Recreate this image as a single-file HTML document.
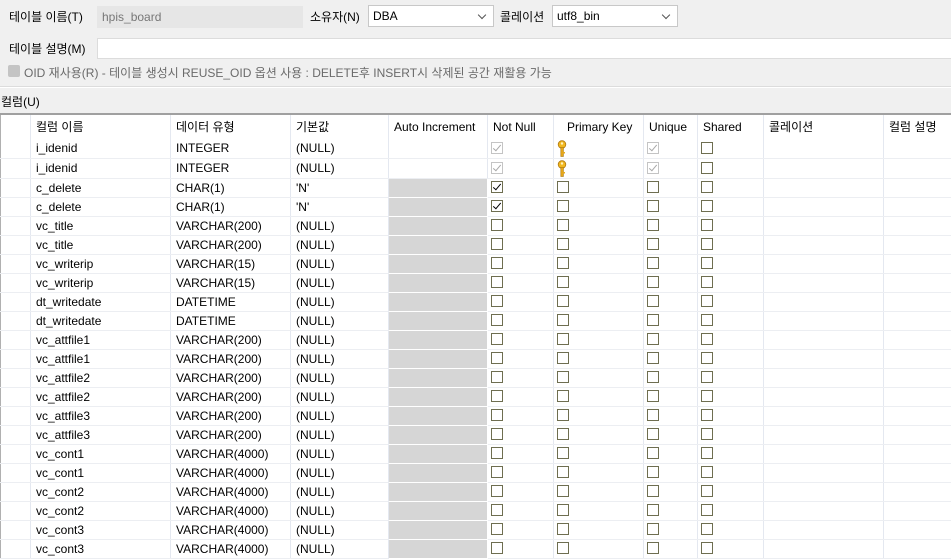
<!DOCTYPE html>
<html><head><meta charset="utf-8"><style>
*{box-sizing:border-box;margin:0;padding:0}
body{width:951px;height:558px;overflow:hidden;background:#fff;font-family:"Liberation Sans","Noto Sans CJK KR",sans-serif;font-size:12px;color:#000;position:relative}
.top{position:absolute;left:0;top:0;width:951px;height:87px;background:#f0f0f0;border-bottom:1px solid #dcdcdc}
.a{position:absolute;white-space:nowrap}
.box{position:absolute;border:1px solid #c8c8c8;background:#fff;height:22px;line-height:20px;padding-left:4px}
.sel:after{content:"";position:absolute;right:8px;top:6px;width:5px;height:5px;border-right:1px solid #555;border-bottom:1px solid #555;transform:rotate(45deg)}
.mid{position:absolute;left:0;top:88px;width:951px;height:25px;background:#f0f0f0}
table{position:absolute;left:0;top:113px;border-collapse:collapse;table-layout:fixed;width:951px;border-top:2px solid #a0a0a0;border-left:1px solid #b0b0b0}
td{height:19px;border-bottom:1px solid #eceef2;border-right:1px solid #e4e8f0;padding:0 0 0 5px;white-space:nowrap;overflow:hidden;position:relative;vertical-align:middle;line-height:18px}
tr.h td{height:24px;border-bottom:none;line-height:24px}
td.g{background:#d6d6d6;border:1px solid #fff}
.c{display:inline-block;width:12px;height:12px;border:1px solid #6e6e50;vertical-align:middle;position:relative;top:-1px;margin-left:-2px;background:#fff}
.cd{border-color:#c4c4c4}
.c.k:after,.c.kd:after{content:"";position:absolute;left:3px;top:0px;width:3px;height:7px;border-right:1.5px solid #000;border-bottom:1.5px solid #000;transform:rotate(40deg)}
.c.kd:after{border-color:#a8a8a8;border-width:1px}
.key{display:inline-block;margin-left:-2px;vertical-align:middle}
</style></head><body>
<div class="top">
<div class="a" style="left:9px;top:8px">테이블 이름(T)</div>
<div class="box" style="left:97px;top:6px;width:206px;background:#e6e6e6;border-color:#e6e6e6;color:#777">hpis_board</div>
<div class="a" style="left:310px;top:8px">소유자(N)</div>
<div class="box sel" style="left:368px;top:5px;width:126px">DBA</div>
<div class="a" style="left:500px;top:8px">콜레이션</div>
<div class="box sel" style="left:552px;top:5px;width:126px">utf8_bin</div>
<div class="a" style="left:9px;top:40px">테이블 설명(M)</div>
<div class="box" style="left:97px;top:38px;width:860px;height:21px;border-color:#dcdcdc"></div>
<div class="a" style="left:8px;top:65px;width:12px;height:12px;background:#c4c4c4;border-radius:2px"></div>
<div class="a" style="left:24px;top:64px;color:#6a6a6a">OID 재사용(R) - 테이블 생성시 REUSE_OID 옵션 사용 : DELETE후 INSERT시 삭제된 공간 재활용 가능</div>
</div>
<div class="mid"><div class="a" style="left:1px;top:5px">컬럼(U)</div></div>
<svg width="0" height="0" style="position:absolute"><defs><symbol id="k" viewBox="0 0 10 18"><circle cx="5" cy="4.5" r="3.8" fill="#f2b820" stroke="#b07a10" stroke-width=".8"/><circle cx="5" cy="3.5" r="1.2" fill="#fff3c0"/><rect x="3.8" y="7.5" width="2.6" height="9" fill="#e6a818" stroke="#a87410" stroke-width=".6"/><rect x="6" y="12" width="2" height="1.5" fill="#e6a818"/></symbol></defs></svg>
<table>
<colgroup><col style="width:30px"><col style="width:140px"><col style="width:120px"><col style="width:98px"><col style="width:99px"><col style="width:66px"><col style="width:90px"><col style="width:54px"><col style="width:66px"><col style="width:120px"><col style="width:68px"></colgroup>
<tr class="h"><td></td><td>컬럼 이름</td><td>데이터 유형</td><td>기본값</td><td>Auto Increment</td><td>Not Null</td><td style="padding-left:13px">Primary Key</td><td>Unique</td><td>Shared</td><td>콜레이션</td><td>컬럼 설명</td></tr>
<tr><td></td><td>i_idenid</td><td>INTEGER</td><td>(NULL)</td><td></td><td><span class="c cd kd"></span></td><td><svg class="key" width="10" height="18"><use href="#k"/></svg></td><td><span class="c cd kd"></span></td><td><span class="c"></span></td><td></td><td></td></tr>
<tr><td></td><td>i_idenid</td><td>INTEGER</td><td>(NULL)</td><td></td><td><span class="c cd kd"></span></td><td><svg class="key" width="10" height="18"><use href="#k"/></svg></td><td><span class="c cd kd"></span></td><td><span class="c"></span></td><td></td><td></td></tr>
<tr><td></td><td>c_delete</td><td>CHAR(1)</td><td>'N'</td><td class="g"></td><td><span class="c k"></span></td><td><span class="c"></span></td><td><span class="c"></span></td><td><span class="c"></span></td><td></td><td></td></tr>
<tr><td></td><td>c_delete</td><td>CHAR(1)</td><td>'N'</td><td class="g"></td><td><span class="c k"></span></td><td><span class="c"></span></td><td><span class="c"></span></td><td><span class="c"></span></td><td></td><td></td></tr>
<tr><td></td><td>vc_title</td><td>VARCHAR(200)</td><td>(NULL)</td><td class="g"></td><td><span class="c"></span></td><td><span class="c"></span></td><td><span class="c"></span></td><td><span class="c"></span></td><td></td><td></td></tr>
<tr><td></td><td>vc_title</td><td>VARCHAR(200)</td><td>(NULL)</td><td class="g"></td><td><span class="c"></span></td><td><span class="c"></span></td><td><span class="c"></span></td><td><span class="c"></span></td><td></td><td></td></tr>
<tr><td></td><td>vc_writerip</td><td>VARCHAR(15)</td><td>(NULL)</td><td class="g"></td><td><span class="c"></span></td><td><span class="c"></span></td><td><span class="c"></span></td><td><span class="c"></span></td><td></td><td></td></tr>
<tr><td></td><td>vc_writerip</td><td>VARCHAR(15)</td><td>(NULL)</td><td class="g"></td><td><span class="c"></span></td><td><span class="c"></span></td><td><span class="c"></span></td><td><span class="c"></span></td><td></td><td></td></tr>
<tr><td></td><td>dt_writedate</td><td>DATETIME</td><td>(NULL)</td><td class="g"></td><td><span class="c"></span></td><td><span class="c"></span></td><td><span class="c"></span></td><td><span class="c"></span></td><td></td><td></td></tr>
<tr><td></td><td>dt_writedate</td><td>DATETIME</td><td>(NULL)</td><td class="g"></td><td><span class="c"></span></td><td><span class="c"></span></td><td><span class="c"></span></td><td><span class="c"></span></td><td></td><td></td></tr>
<tr><td></td><td>vc_attfile1</td><td>VARCHAR(200)</td><td>(NULL)</td><td class="g"></td><td><span class="c"></span></td><td><span class="c"></span></td><td><span class="c"></span></td><td><span class="c"></span></td><td></td><td></td></tr>
<tr><td></td><td>vc_attfile1</td><td>VARCHAR(200)</td><td>(NULL)</td><td class="g"></td><td><span class="c"></span></td><td><span class="c"></span></td><td><span class="c"></span></td><td><span class="c"></span></td><td></td><td></td></tr>
<tr><td></td><td>vc_attfile2</td><td>VARCHAR(200)</td><td>(NULL)</td><td class="g"></td><td><span class="c"></span></td><td><span class="c"></span></td><td><span class="c"></span></td><td><span class="c"></span></td><td></td><td></td></tr>
<tr><td></td><td>vc_attfile2</td><td>VARCHAR(200)</td><td>(NULL)</td><td class="g"></td><td><span class="c"></span></td><td><span class="c"></span></td><td><span class="c"></span></td><td><span class="c"></span></td><td></td><td></td></tr>
<tr><td></td><td>vc_attfile3</td><td>VARCHAR(200)</td><td>(NULL)</td><td class="g"></td><td><span class="c"></span></td><td><span class="c"></span></td><td><span class="c"></span></td><td><span class="c"></span></td><td></td><td></td></tr>
<tr><td></td><td>vc_attfile3</td><td>VARCHAR(200)</td><td>(NULL)</td><td class="g"></td><td><span class="c"></span></td><td><span class="c"></span></td><td><span class="c"></span></td><td><span class="c"></span></td><td></td><td></td></tr>
<tr><td></td><td>vc_cont1</td><td>VARCHAR(4000)</td><td>(NULL)</td><td class="g"></td><td><span class="c"></span></td><td><span class="c"></span></td><td><span class="c"></span></td><td><span class="c"></span></td><td></td><td></td></tr>
<tr><td></td><td>vc_cont1</td><td>VARCHAR(4000)</td><td>(NULL)</td><td class="g"></td><td><span class="c"></span></td><td><span class="c"></span></td><td><span class="c"></span></td><td><span class="c"></span></td><td></td><td></td></tr>
<tr><td></td><td>vc_cont2</td><td>VARCHAR(4000)</td><td>(NULL)</td><td class="g"></td><td><span class="c"></span></td><td><span class="c"></span></td><td><span class="c"></span></td><td><span class="c"></span></td><td></td><td></td></tr>
<tr><td></td><td>vc_cont2</td><td>VARCHAR(4000)</td><td>(NULL)</td><td class="g"></td><td><span class="c"></span></td><td><span class="c"></span></td><td><span class="c"></span></td><td><span class="c"></span></td><td></td><td></td></tr>
<tr><td></td><td>vc_cont3</td><td>VARCHAR(4000)</td><td>(NULL)</td><td class="g"></td><td><span class="c"></span></td><td><span class="c"></span></td><td><span class="c"></span></td><td><span class="c"></span></td><td></td><td></td></tr>
<tr><td></td><td>vc_cont3</td><td>VARCHAR(4000)</td><td>(NULL)</td><td class="g"></td><td><span class="c"></span></td><td><span class="c"></span></td><td><span class="c"></span></td><td><span class="c"></span></td><td></td><td></td></tr>
</table>
</body></html>
